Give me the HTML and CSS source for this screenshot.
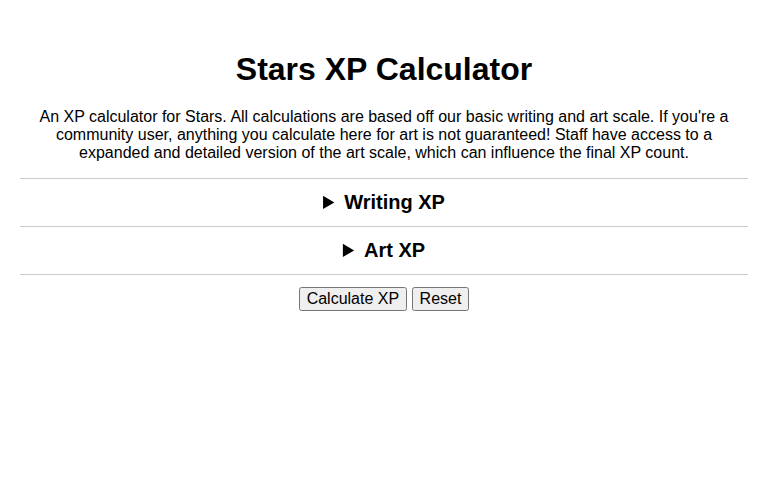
FILE: index.html
```html
<!DOCTYPE html>
<html lang="en">
<head>
    <meta charset="UTF-8">
    <meta name="viewport" content="width=device-width, initial-scale=1.0">
    <title>Stars XP Calculator</title>
    <link rel="stylesheet" href="styles.css">
</head>
<body>
    <h1>Stars XP Calculator</h1>
    <p class="intro">An XP calculator for Stars. All calculations are based off our basic writing and art scale. If you're a community user, anything you calculate here for art is not guaranteed! Staff have access to a expanded and detailed version of the art scale, which can influence the final XP count.</p>

    <details class="section">
        <summary>Writing XP</summary>
        <div class="fields"></div>
    </details>
    <details class="section">
        <summary>Art XP</summary>
        <div class="fields"></div>
    </details>

    <div class="actions">
        <button type="button">Calculate XP</button>
        <button type="reset">Reset</button>
    </div>
</body>
</html>
```

FILE: styles.css
```css
body {
    font-family: "Liberation Sans", Arial, sans-serif;
    margin: 0;
    padding: 20px;
    text-align: center;
    color: #000;
    background: #fff;
}

h1 {
    font-size: 32px;
    margin: 31px 0 20px;
}

.intro {
    font-size: 16px;
    margin: 0 0 16px;
}

.section {
    border-top: 1px solid #ccc;
    padding: 12px 0;
}

.section:last-of-type {
    border-bottom: 1px solid #ccc;
}

.section summary {
    font-size: 20px;
    font-weight: bold;
    cursor: pointer;
}

.actions {
    margin-top: 12px;
}

button {
    font-family: "Liberation Sans", Arial, sans-serif;
    font-size: 16px;
}
```
